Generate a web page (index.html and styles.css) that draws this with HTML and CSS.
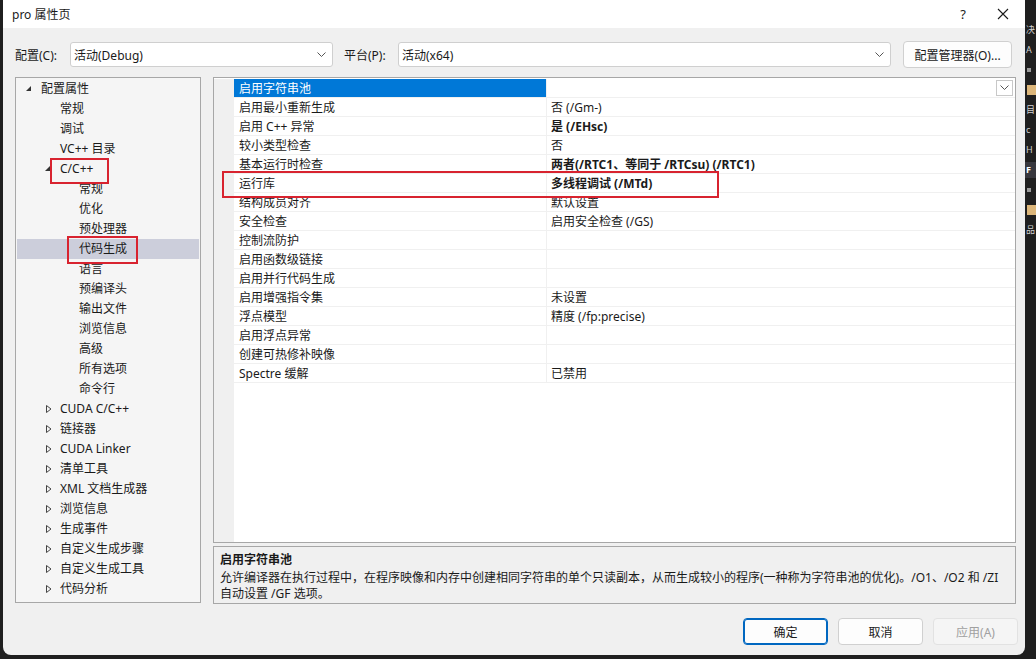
FILE: index.html
```html
<!DOCTYPE html>
<html>
<head>
    <title>pro 属性页</title>
    <link rel="stylesheet" href="styles.css">
</head>
<body>
<div class="screen">
    <div class="dialog">
        <div class="titlebar">
            <span class="title">pro 属性页</span>
            <span class="title-btn help">?</span>
            <span class="title-btn close">
                <svg width="12" height="12" viewBox="0 0 12 12"><path d="M1 1 L11 11 M11 1 L1 11" stroke="#1a1a1a" stroke-width="1.1" fill="none"/></svg>
            </span>
        </div>

        <div class="config-row">
            <label class="cfg-label first">配置(C):</label>
            <div class="combo combo-config">
                <span>活动(Debug)</span>
                <svg class="chev" width="9" height="6" viewBox="0 0 9 6"><path d="M0.5 0.5 L4.5 4.5 L8.5 0.5" stroke="#555" fill="none"/></svg>
            </div>
            <label class="cfg-label second">平台(P):</label>
            <div class="combo combo-platform">
                <span>活动(x64)</span>
                <svg class="chev" width="9" height="6" viewBox="0 0 9 6"><path d="M0.5 0.5 L4.5 4.5 L8.5 0.5" stroke="#555" fill="none"/></svg>
            </div>
            <button class="btn manager">配置管理器(O)...</button>
        </div>

        <div class="main">
            <div class="tree">
                <div class="node lvl0"><span class="arrow open"></span>配置属性</div>
                <div class="node lvl1"><span class="arrow"></span>常规</div>
                <div class="node lvl1"><span class="arrow"></span>调试</div>
                <div class="node lvl1"><span class="arrow"></span>VC++ 目录</div>
                <div class="node lvl1"><span class="arrow open"></span>C/C++</div>
                <div class="node lvl2"><span class="arrow"></span>常规</div>
                <div class="node lvl2"><span class="arrow"></span>优化</div>
                <div class="node lvl2"><span class="arrow"></span>预处理器</div>
                <div class="node lvl2 selected"><span class="arrow"></span>代码生成</div>
                <div class="node lvl2"><span class="arrow"></span>语言</div>
                <div class="node lvl2"><span class="arrow"></span>预编译头</div>
                <div class="node lvl2"><span class="arrow"></span>输出文件</div>
                <div class="node lvl2"><span class="arrow"></span>浏览信息</div>
                <div class="node lvl2"><span class="arrow"></span>高级</div>
                <div class="node lvl2"><span class="arrow"></span>所有选项</div>
                <div class="node lvl2"><span class="arrow"></span>命令行</div>
                <div class="node lvl1"><span class="arrow closed"></span>CUDA C/C++</div>
                <div class="node lvl1"><span class="arrow closed"></span>链接器</div>
                <div class="node lvl1"><span class="arrow closed"></span>CUDA Linker</div>
                <div class="node lvl1"><span class="arrow closed"></span>清单工具</div>
                <div class="node lvl1"><span class="arrow closed"></span>XML 文档生成器</div>
                <div class="node lvl1"><span class="arrow closed"></span>浏览信息</div>
                <div class="node lvl1"><span class="arrow closed"></span>生成事件</div>
                <div class="node lvl1"><span class="arrow closed"></span>自定义生成步骤</div>
                <div class="node lvl1"><span class="arrow closed"></span>自定义生成工具</div>
                <div class="node lvl1"><span class="arrow closed"></span>代码分析</div>

                <div class="mark mark-cpp"></div>
                <div class="mark mark-codegen"></div>
            </div>

            <div class="right">
                <div class="grid">
                    <div class="row">
                        <div class="gutter"></div>
                        <div class="name selected">启用字符串池</div>
                        <div class="value">
                            <span class="drop">
                                <svg width="9" height="6" viewBox="0 0 9 6"><path d="M0.5 0.5 L4.5 4.5 L8.5 0.5" stroke="#555" fill="none"/></svg>
                            </span>
                        </div>
                    </div>
                    <div class="row"><div class="gutter"></div><div class="name">启用最小重新生成</div><div class="value">否 (/Gm-)</div></div>
                    <div class="row"><div class="gutter"></div><div class="name">启用 C++ 异常</div><div class="value bold">是 (/EHsc)</div></div>
                    <div class="row"><div class="gutter"></div><div class="name">较小类型检查</div><div class="value">否</div></div>
                    <div class="row"><div class="gutter"></div><div class="name">基本运行时检查</div><div class="value bold">两者(/RTC1、等同于 /RTCsu) (/RTC1)</div></div>
                    <div class="row"><div class="gutter"></div><div class="name">运行库</div><div class="value bold">多线程调试 (/MTd)</div></div>
                    <div class="row"><div class="gutter"></div><div class="name">结构成员对齐</div><div class="value">默认设置</div></div>
                    <div class="row"><div class="gutter"></div><div class="name">安全检查</div><div class="value">启用安全检查 (/GS)</div></div>
                    <div class="row"><div class="gutter"></div><div class="name">控制流防护</div><div class="value"></div></div>
                    <div class="row"><div class="gutter"></div><div class="name">启用函数级链接</div><div class="value"></div></div>
                    <div class="row"><div class="gutter"></div><div class="name">启用并行代码生成</div><div class="value"></div></div>
                    <div class="row"><div class="gutter"></div><div class="name">启用增强指令集</div><div class="value">未设置</div></div>
                    <div class="row"><div class="gutter"></div><div class="name">浮点模型</div><div class="value">精度 (/fp:precise)</div></div>
                    <div class="row"><div class="gutter"></div><div class="name">启用浮点异常</div><div class="value"></div></div>
                    <div class="row"><div class="gutter"></div><div class="name">创建可热修补映像</div><div class="value"></div></div>
                    <div class="row"><div class="gutter"></div><div class="name">Spectre 缓解</div><div class="value">已禁用</div></div>
                    <div class="grid-rest"><div class="gutter"></div></div>

                    <div class="mark mark-runtime"></div>
                </div>

                <div class="desc">
                    <div class="desc-title">启用字符串池</div>
                    <div class="desc-text">允许编译器在执行过程中，在程序映像和内存中创建相同字符串的单个只读副本，从而生成较小的程序(一种称为字符串池的优化)。/O1、/O2 和 /ZI 自动设置 /GF 选项。</div>
                </div>
            </div>
        </div>

        <div class="footer">
            <button class="btn ok">确定</button>
            <button class="btn">取消</button>
            <button class="btn disabled">应用(A)</button>
        </div>
    </div>

    <div class="side">
        <div class="side-item">决</div>
        <div class="side-item">A</div>
        <div class="side-item dim"></div>
        <div class="side-item folder"></div>
        <div class="side-item">目</div>
        <div class="side-item">c</div>
        <div class="side-item">H</div>
        <div class="side-item hl">F</div>
        <div class="side-item dim"></div>
        <div class="side-item folder"></div>
        <div class="side-item">品</div>
    </div>
</div>
</body>
</html>
```

FILE: styles.css
```css
* {
    box-sizing: border-box;
}

body {
    margin: 0;
    background: #1f1f1f;
    font-family: 'Noto Sans', 'Noto Sans CJK SC', sans-serif;
    font-size: 12px;
    color: #1a1a1a;
}

.screen {
    display: flex;
    width: 1036px;
    height: 659px;
    overflow: hidden;
}

.dialog {
    width: 1022px;
    height: 655px;
    margin-left: 3px;
    background: #f0f0f0;
    border-radius: 0 0 8px 8px;
    display: flex;
    flex-direction: column;
    overflow: hidden;
}

/* title bar */
.titlebar {
    height: 28px;
    background: #ffffff;
    display: flex;
    align-items: center;
    padding-left: 9px;
}

.title {
    flex: 1;
    font-size: 12px;
}

.title-btn {
    width: 40px;
    text-align: center;
    display: flex;
    justify-content: center;
    align-items: center;
}

.help {
    font-size: 13px;
}

.close {
    margin-right: 2px;
}

/* configuration row */
.config-row {
    display: flex;
    align-items: center;
    height: 27px;
    margin-top: 13px;
    padding-left: 12px;
}

.cfg-label {
    width: 55px;
}

.cfg-label.second {
    width: 54px;
    margin-left: 11px;
}

.combo {
    height: 25px;
    background: #ffffff;
    border: 1px solid #cfcfcf;
    border-radius: 3px;
    display: flex;
    align-items: center;
    justify-content: space-between;
    padding: 0 6px 0 3px;
}

.combo-config {
    width: 263px;
}

.combo-platform {
    width: 493px;
}

.btn {
    font-family: inherit;
    font-size: 12px;
    color: #1a1a1a;
    background: #fdfdfd;
    border: 1px solid #d0d0d0;
    border-radius: 4px;
    height: 27px;
    padding: 0;
}

.manager {
    width: 109px;
    margin-left: 12px;
}

/* main area */
.main {
    display: flex;
    gap: 12px;
    margin-top: 9px;
    padding-left: 12px;
}

.tree {
    position: relative;
    width: 186px;
    height: 526px;
    background: #f5f5f5;
    border: 1px solid #a7a7a7;
    padding-top: 1px;
}

.node {
    height: 20px;
    line-height: 20px;
    display: flex;
    align-items: center;
    white-space: nowrap;
    margin: 0 1px;
}

.node.lvl0 { padding-left: 5px; }
.node.lvl1 { padding-left: 24px; }
.node.lvl2 { padding-left: 43px; }

.node.selected {
    background: #cccedb;
}

.arrow {
    width: 19px;
    height: 20px;
    position: relative;
    flex: none;
}

.arrow.open::after {
    content: '';
    position: absolute;
    left: 4px;
    top: 7px;
    width: 0;
    height: 0;
    border-left: 5px solid transparent;
    border-bottom: 5px solid #333;
}

.arrow.closed::after {
    content: '';
    position: absolute;
    left: 5px;
    top: 6px;
    width: 6px;
    height: 8px;
    background: no-repeat center/6px 8px url("data:image/svg+xml,%3Csvg xmlns='http://www.w3.org/2000/svg' width='6' height='8' viewBox='0 0 6 8'%3E%3Cpath d='M0.5 0.5 L5 4 L0.5 7.5 Z' fill='none' stroke='%23444' stroke-width='1'/%3E%3C/svg%3E");
}

/* red callout boxes */
.mark {
    position: absolute;
    border: 2px solid #d8232f;
    pointer-events: none;
}

.mark-cpp {
    left: 34px;
    top: 80px;
    width: 59px;
    height: 26px;
}

.mark-codegen {
    left: 51px;
    top: 158px;
    width: 71px;
    height: 28px;
}

.mark-runtime {
    left: 8px;
    top: 93px;
    width: 497px;
    height: 27px;
}

/* property grid */
.right {
    width: 803px;
    display: flex;
    flex-direction: column;
    gap: 3px;
}

.grid {
    position: relative;
    height: 466px;
    background: #ffffff;
    border: 1px solid #a7a7a7;
    padding-top: 1px;
    display: flex;
    flex-direction: column;
}

.row {
    display: grid;
    grid-template-columns: 20px 313px 1fr;
    height: 19px;
}

.gutter {
    background: #f0f0f0;
}

.name,
.value {
    border-bottom: 1px solid #f0f0f0;
    padding-top: 1px;
    line-height: 17px;
    white-space: nowrap;
}

.name {
    border-right: 1px solid #f0f0f0;
    padding-left: 5px;
}

.name.selected {
    background: #0078d7;
    color: #ffffff;
}

.value {
    padding-left: 4px;
    position: relative;
}

.value.bold {
    font-weight: bold;
}

.drop {
    position: absolute;
    right: 2px;
    top: 1px;
    width: 17px;
    height: 16px;
    border: 1px solid #c8c8c8;
    background: #ffffff;
    display: flex;
    align-items: center;
    justify-content: center;
}

.grid-rest {
    flex: 1;
    display: grid;
    grid-template-columns: 20px 1fr;
}

/* description panel */
.desc {
    height: 58px;
    border: 1px solid #a7a7a7;
    background: #f0f0f0;
    padding: 5px 6px 0 6px;
    line-height: 16px;
}

.desc-title {
    font-weight: bold;
    margin-bottom: 2px;
}

/* footer buttons */
.footer {
    display: flex;
    justify-content: flex-end;
    gap: 10px;
    margin-top: 14px;
    padding-right: 7px;
}

.footer .btn {
    width: 85px;
}

.btn.ok {
    border: 1px solid #0067c0;
    box-shadow: inset 0 0 0 1px #0067c0;
}

.btn.disabled {
    color: #a0a0a0;
    background: #f5f5f5;
    border-color: #e2e2e2;
}

/* strip of the IDE behind the dialog */
.side {
    flex: 1;
    padding-top: 22px;
    display: flex;
    flex-direction: column;
    gap: 4px;
    overflow: hidden;
}

.side-item {
    height: 16px;
    line-height: 16px;
    color: #d0d0d0;
    font-size: 9px;
    padding-left: 1px;
    white-space: nowrap;
}

.side-item.dim {
    margin: 6px 0 6px 2px;
    width: 4px;
    height: 4px;
    background: #9a9a9a;
}

.side-item.folder {
    margin-left: 2px;
    width: 9px;
    background: #dcb67a;
    height: 10px;
    margin-top: 3px;
    margin-bottom: 3px;
}

.side-item.hl {
    background: #37373d;
    font-weight: bold;
    color: #ffffff;
}
```
